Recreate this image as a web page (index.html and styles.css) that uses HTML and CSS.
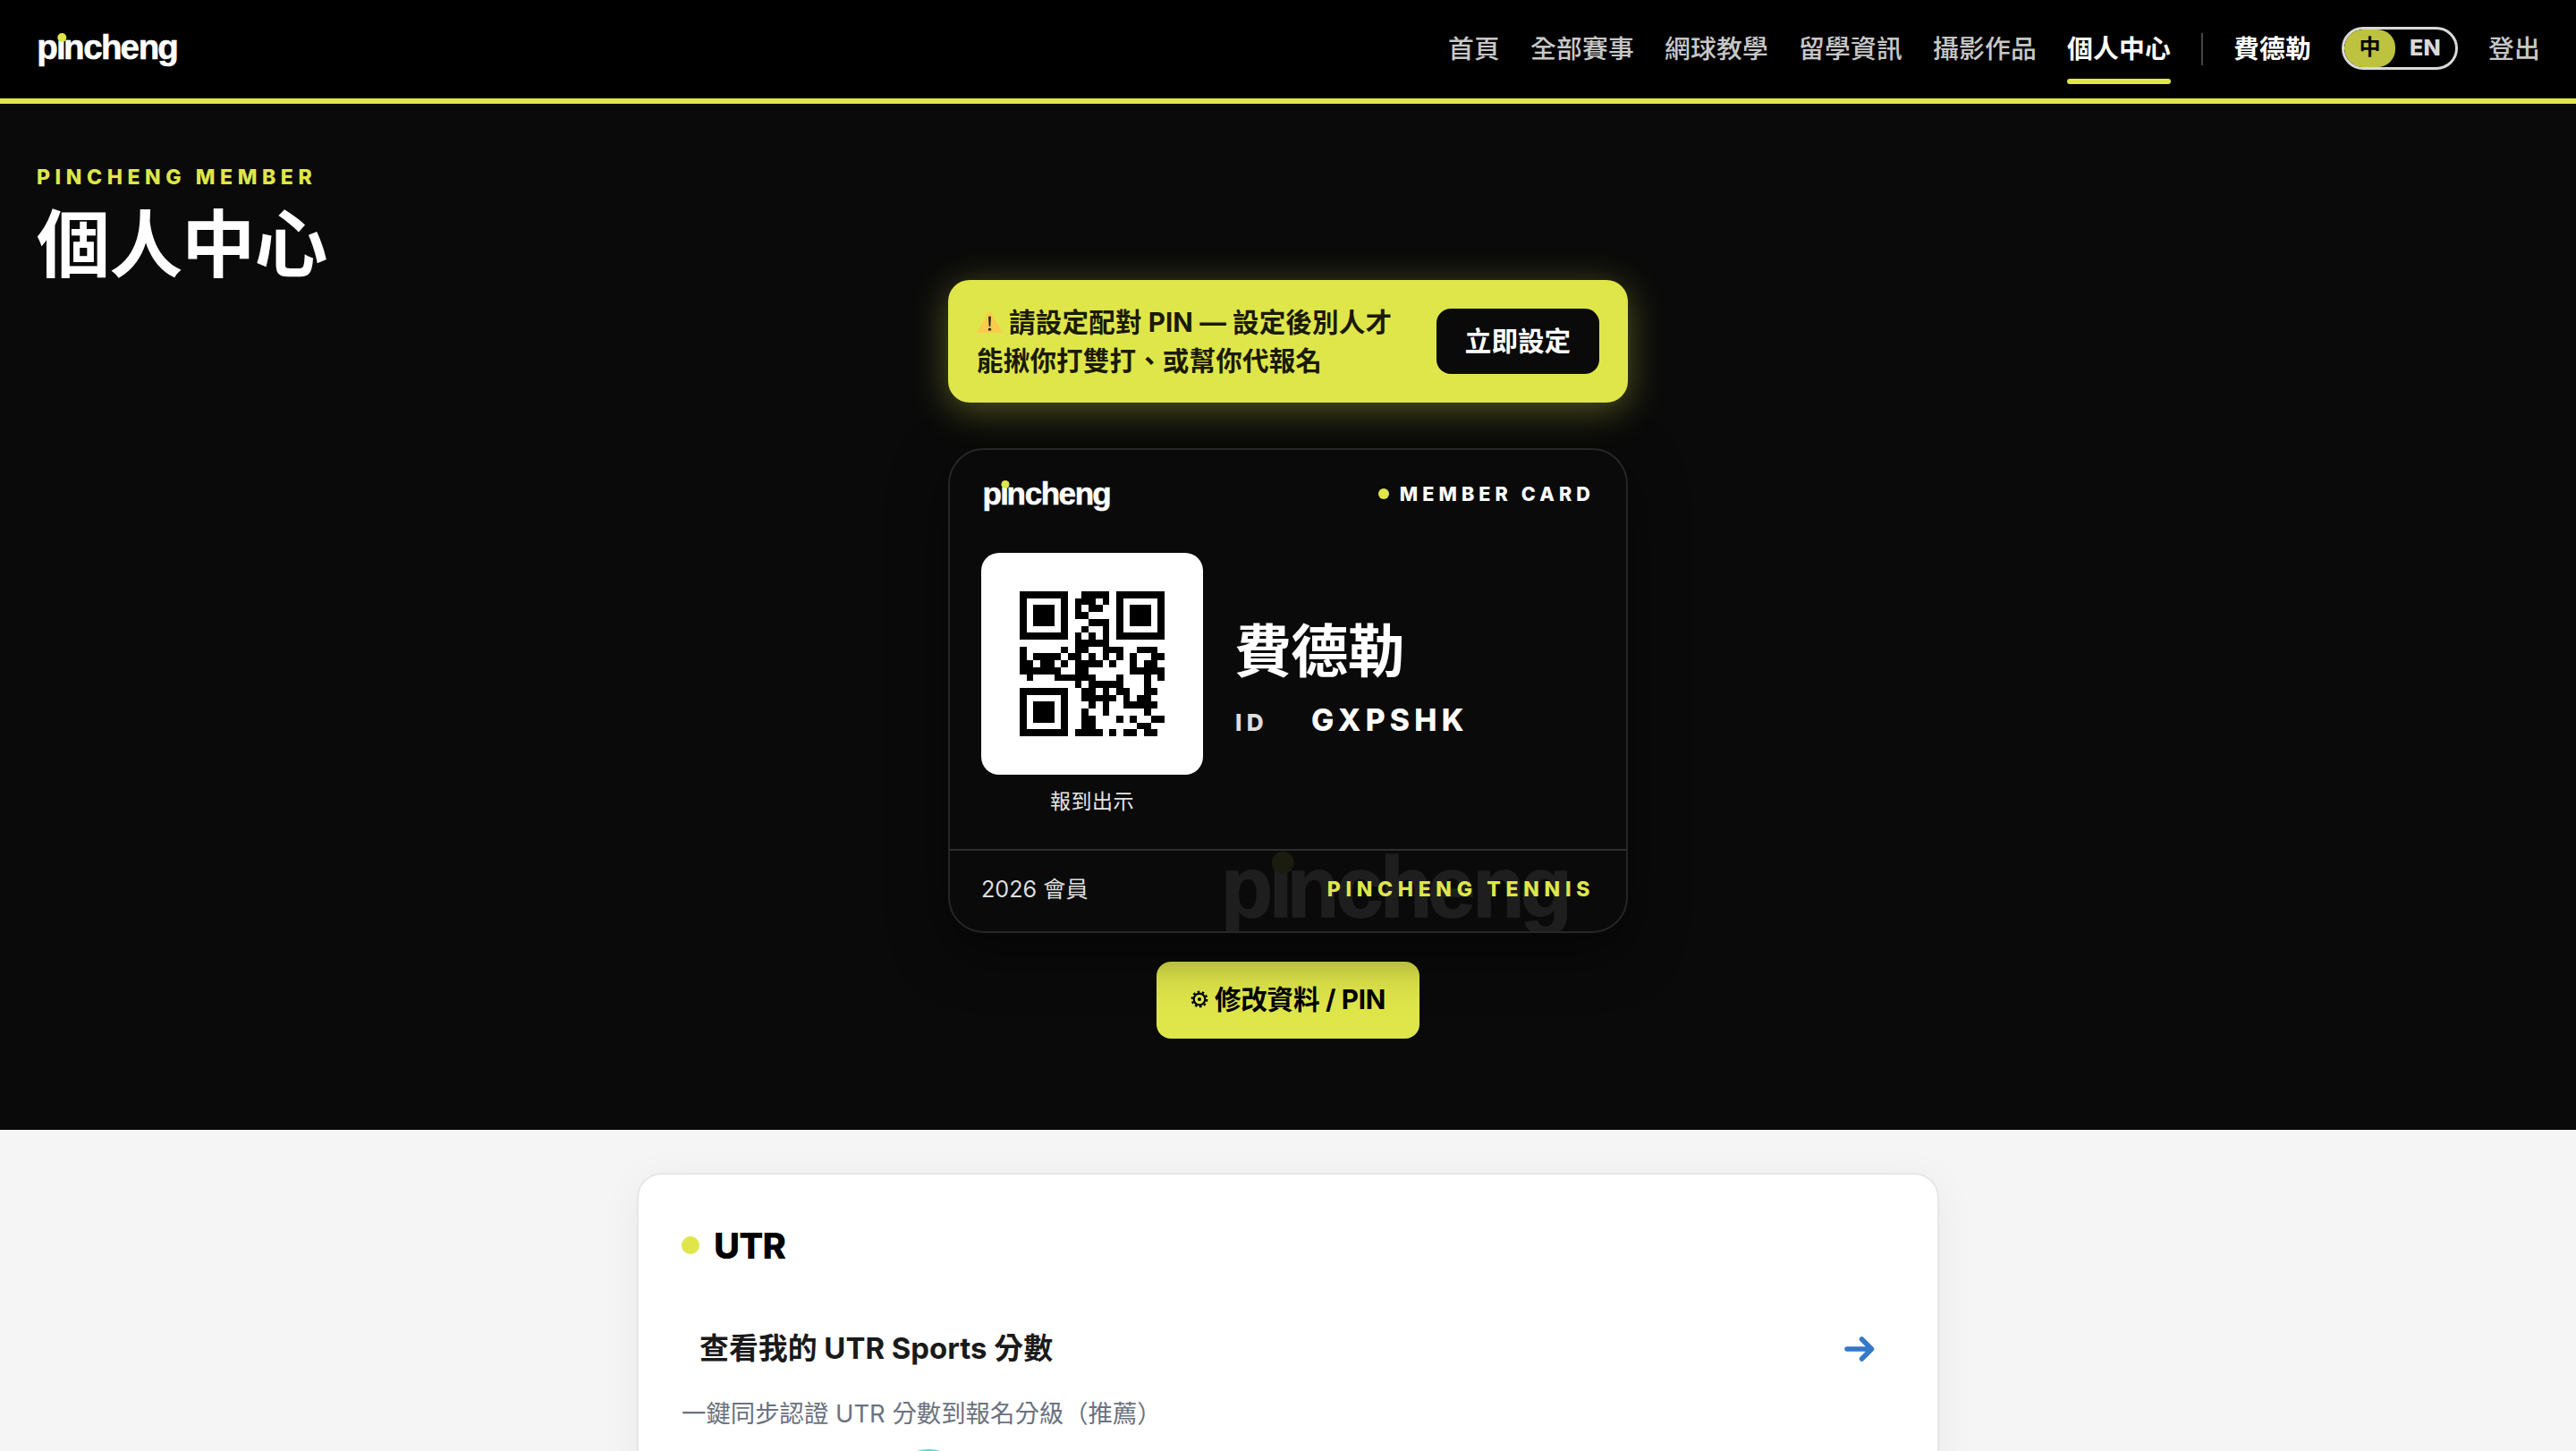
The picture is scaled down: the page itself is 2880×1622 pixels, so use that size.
FILE: index.html
```html
<!DOCTYPE html>
<html lang="zh-Hant">

<head>
    <meta charset="UTF-8">
    <title>個人中心 | pincheng</title>
    <link rel="stylesheet" href="styles.css">
</head>

<body>

    <header class="navbar">
        <a class="brand"><svg class="logo" width="156" height="37" viewBox="0 0 156 37">
                <!-- hides the dot of the i, the ball takes its place -->
                <clipPath id="no-dot">
                    <path d="M-5-5H20V8.300H30V-5H165V45H-5Z" />
                </clipPath>
                <text clip-path="url(#no-dot)" x="-1.7 20.1 28.1 50.2 70.1 91.6 111.8 133.2" y="29.4">pincheng</text>
                <circle cx="26.3" cy="5" r="5" />
            </svg></a>
        <nav class="nav-links">
            <a>首頁</a>
            <a>全部賽事</a>
            <a>網球教學</a>
            <a>留學資訊</a>
            <a>攝影作品</a>
            <a class="active">個人中心</a>
            <span class="nav-divider"></span>
            <a class="nav-user">費德勒</a>
            <div class="lang-toggle">
                <span class="lang on">中</span>
                <span class="lang">EN</span>
            </div>
            <a>登出</a>
        </nav>
    </header>

    <section class="hero">
        <div class="eyebrow">PINCHENG MEMBER</div>
        <h1>個人中心</h1>

        <div class="hero-inner">
            <div class="pin-alert">
                <p><svg class="warn" viewBox="0 0 30 30">
                        <path d="M14 3.500Q15 2 16 3.500L29 26Q30 28 28 28H2Q0 28 1 26Z" fill="#fbcb4e" />
                        <path d="M13.500 9h3l-.6 11.500h-1.800z" fill="#2b2a12" />
                        <circle cx="15" cy="24" r="1.700" fill="#2b2a12" />
                    </svg> 請設定配對 PIN — 設定後別人才<br>能揪你打雙打、或幫你代報名</p>
                <button class="btn-dark">立即設定</button>
            </div>

            <div class="member-card">
                <div class="card-top">
                    <svg class="logo" width="142" height="33.700" viewBox="0 0 156 37">
                        <text clip-path="url(#no-dot)" x="-1.7 20.1 28.1 50.2 70.1 91.6 111.8 133.2" y="29.4">pincheng</text>
                        <circle cx="26.3" cy="5" r="5" />
                    </svg>
                    <span class="card-tag">MEMBER CARD</span>
                </div>
                <div class="card-body">
                    <div class="qr-col">
                        <div class="qr">
                            <svg viewBox="0 0 21 21" shape-rendering="crispEdges">
                                <!-- finder patterns -->
                                <path d="M.5.5h6v6h-6zM14.5.5h6v6h-6zM.5 14.500h6v6h-6z" fill="none" stroke="#000" />
                                <path d="M2 2h3v3h-3zM16 2h3v3h-3zM2 16h3v3h-3z" />
                                <!-- data modules, one line per row -->
                                <path stroke="#000" d="M9 .5h4
                                    M8 1.500h3m1 0h1
                                    M8 2.500h1m1 0h2
                                    M8 3.500h2
                                    M10 4.500h3
                                    M9 5.500h1m2 0h1
                                    M8 6.500h1m1 0h1m1 0h1
                                    M8 7.500h5
                                    M0 8.500h1m5 0h1m1 0h2m2 0h3m2 0h3
                                    M0 9.500h1m1 0h4m1 0h2m1 0h1m1 0h1m1 0h1m1 0h1m2 0h2
                                    M0 10.500h2m1 0h2m1 0h1m1 0h4m1 0h1m2 0h1m1 0h2
                                    M0 11.500h6m2 0h2m6 0h5
                                    M1 12.500h1m3 0h6m3 0h1m3 0h1m1 0h1
                                    M8 13.500h1m1 0h5m3 0h1
                                    M9 14.500h2m1 0h1m1 0h2m2 0h2
                                    M9 15.500h5m1 0h1m1 0h2
                                    M10 16.500h1m1 0h1m2 0h5
                                    M9 17.500h1m2 0h1m5 0h1
                                    M9 18.500h2m3 0h1m1 0h1m2 0h2
                                    M9 19.500h2m6 0h2
                                    M8 20.500h4m1 0h1m1 0h2m1 0h2" />
                            </svg>
                        </div>
                        <div class="qr-label">報到出示</div>
                    </div>
                    <div class="member-info">
                        <div class="member-name">費德勒</div>
                        <div class="member-id"><span>ID</span><b>GXPSHK</b></div>
                    </div>
                </div>
                <div class="card-foot">
                    <svg class="logo watermark" width="387" height="91.800" viewBox="0 0 156 37">
                        <text clip-path="url(#no-dot)" x="-1.7 20.1 28.1 50.2 70.1 91.6 111.8 133.2" y="29.4">pincheng</text>
                        <circle cx="26.3" cy="5" r="5" />
                    </svg>
                    <span class="year">2026 會員</span>
                    <span class="club">PINCHENG TENNIS</span>
                </div>
            </div>

            <button class="btn-edit"><svg class="gear" viewBox="0 0 20 20">
                    <circle cx="10" cy="10" r="6.300" fill="none" stroke="#000" stroke-width="2.200" />
                    <circle cx="10" cy="10" r="8.300" fill="none" stroke="#000" stroke-width="2.200" stroke-dasharray="2.600 2.615" />
                    <circle cx="10" cy="10" r="2" />
                </svg>修改資料 / PIN</button>
        </div>
    </section>

    <main class="content">
        <div class="panel">
            <h2>UTR</h2>
            <a class="utr-link">
                <span>查看我的 UTR Sports 分數</span>
                <svg class="arrow" viewBox="0 0 34 28">
                    <path d="M3 14H30M19.500 3 30.500 14 19.500 25" />
                </svg>
            </a>
            <p class="utr-note">一鍵同步認證 UTR 分數到報名分級（推薦）</p>
            <div class="sync-badge"></div>
        </div>
    </main>

</body>

</html>
```

FILE: styles.css
```css
* {
    box-sizing: border-box;
}

body {
    margin: 0;
    height: 1622px;
    overflow: hidden;
    background: #f5f5f5;
    font-family: Inter, "Noto Sans CJK TC", sans-serif;
    color: #000;
}

h1, h2, p {
    margin: 0;
}

button {
    border: 0;
    font-family: inherit;
}

.logo {
    display: block;
    overflow: visible;
}

.logo text {
    font-family: "Liberation Sans", Arial, sans-serif;
    font-size: 38.5px;
    font-weight: 700;
    fill: #fff;
    stroke: #fff;
    stroke-width: 0.6px;
}

.logo circle {
    fill: #dfe64a;
}

/* navbar */
.navbar {
    display: flex;
    align-items: center;
    justify-content: space-between;
    height: 116px;
    padding: 0 40px 0 43px;
    background: #000;
    border-bottom: 6px solid #dfe64a;
}

.nav-links {
    display: flex;
    align-items: center;
    gap: 34px;
    font-size: 28.8px;
    letter-spacing: 0.2px;
    line-height: 42px;
    color: #c7c7c7;
}

.nav-links a {
    position: relative;
    font-weight: 500;
}

.nav-links .active,
.nav-links .nav-user {
    color: #fff;
    font-weight: 700;
}

.nav-links .active::after {
    content: "";
    position: absolute;
    left: 0;
    right: 0;
    bottom: -18px;
    height: 6px;
    border-radius: 3px;
    background: #dfe64a;
}

.nav-divider {
    width: 2px;
    height: 36px;
    background: #444;
}

.lang-toggle {
    display: flex;
    width: 130px;
    height: 48px;
    margin-top: -2px;
    border: 3px solid #fff;
    border-radius: 24px;
    overflow: hidden;
    opacity: 0.85;
    font-size: 25px;
    font-weight: 800;
    color: #fff;
}

.lang {
    flex: 1;
    text-align: center;
    line-height: 41px;
}

.lang.on {
    flex: 0 0 57px;
    border-radius: 20px;
    background: #dfe64a;
    color: #000;
    font-size: 24px;
    font-weight: 700;
    line-height: 40px;
}

/* hero */
.hero {
    height: 1147px;
    padding: 68px 40px 0;
    background: #0a0a0a;
}

.eyebrow {
    padding-left: 1px;
    color: #dfe64a;
    font-size: 23px;
    font-weight: 800;
    letter-spacing: 0.243em;
    line-height: 28px;
}

h1 {
    height: 101px;
    padding-left: 1px;
    color: #fff;
    font-size: 82px;
    font-weight: 700;
    letter-spacing: -0.01em;
    line-height: 123px;
}

.hero-inner {
    width: 760px;
    margin: 0 auto;
    display: flex;
    flex-direction: column;
    align-items: center;
}

.pin-alert {
    display: flex;
    align-items: center;
    justify-content: space-between;
    width: 100%;
    height: 137px;
    margin-bottom: 51px;
    padding: 0 32px;
    border-radius: 24px;
    background: #dfe64a;
    box-shadow: 0 8px 40px rgba(223, 230, 74, 0.35);
    color: #1a1a05;
    font-size: 29.6px;
    font-weight: 700;
    letter-spacing: 0.1px;
    line-height: 43px;
}

.pin-alert p {
    white-space: nowrap;
}

.warn {
    width: 29px;
    height: 29px;
    vertical-align: -3px;
}

.btn-dark {
    width: 182px;
    height: 73px;
    padding: 0 0 2px;
    border-radius: 16px;
    background: #0a0a0a;
    color: #fff;
    font-size: 29.6px;
    font-weight: 700;
    line-height: 36px;
}

.member-card {
    position: relative;
    z-index: 1;
    width: 100%;
    height: 542px;
    border: 2px solid #262626;
    border-radius: 40px;
    background: #0a0a0a;
    box-shadow: 0 20px 60px rgba(0, 0, 0, 0.5);
    color: #fff;
    overflow: hidden;
}

.card-top {
    display: flex;
    align-items: center;
    justify-content: space-between;
    height: 98px;
    padding: 0 35px 0 38px;
}

.card-top .logo {
    margin-top: 4px;
}

.card-tag {
    display: flex;
    align-items: center;
    gap: 12px;
    font-size: 21.6px;
    font-weight: 800;
    letter-spacing: 0.235em;
}

.card-tag::before {
    content: "";
    width: 12px;
    height: 12px;
    border-radius: 50%;
    background: #dfe64a;
}

.card-body {
    display: flex;
    gap: 35px;
    height: 348px;
    padding: 17px 35px 0;
}

.qr {
    width: 248px;
    height: 248px;
    padding: 43px;
    border-radius: 20px;
    background: #fff;
}

.qr svg {
    display: block;
    width: 162px;
    height: 162px;
}

.qr-label {
    padding-top: 12px;
    text-align: center;
    font-size: 23px;
    letter-spacing: 0.5px;
    line-height: 36px;
    color: #e6e6e6;
}

.member-info {
    padding-top: 70px;
}

.member-name {
    font-size: 64px;
    font-weight: 700;
    letter-spacing: -0.01em;
    line-height: 80px;
}

.member-id {
    display: flex;
    align-items: baseline;
    gap: 48px;
    margin-top: 16px;
    padding-left: 1px;
    line-height: 42px;
}

.member-id span {
    color: #ddd;
    font-size: 26.2px;
    font-weight: 800;
    letter-spacing: 0.2em;
}

.member-id b {
    font-size: 33.6px;
    font-weight: 800;
    letter-spacing: 0.157em;
}

.card-foot {
    position: relative;
    display: flex;
    align-items: center;
    justify-content: space-between;
    height: 92px;
    padding: 0 35px 5px;
    border-top: 2px solid #2e2e2e;
    line-height: 30px;
}

.watermark {
    position: absolute;
    left: 307px;
    top: 1px;
    opacity: 0.08;
}

.year {
    color: #ddd;
    font-size: 25.2px;
}

.club {
    position: relative;
    color: #dfe64a;
    font-size: 23px;
    font-weight: 800;
    letter-spacing: 0.247em;
}

.btn-edit {
    display: flex;
    align-items: center;
    justify-content: center;
    gap: 7px;
    width: 294px;
    height: 86px;
    margin-top: 32px;
    padding: 0 0 2px;
    border-radius: 16px;
    background: #dfe64a;
    color: #000;
    font-size: 29.6px;
    font-weight: 700;
    letter-spacing: -0.01em;
    line-height: 36px;
}

.gear {
    width: 20px;
    height: 20px;
}

/* content */
.content {
    padding-top: 48px;
}

.panel {
    width: 1456px;
    height: 700px;
    margin: 0 auto;
    padding: 50px 48px 0;
    border: 2px solid #e6e6e6;
    border-radius: 28px;
    background: #fff;
    box-shadow: 0 8px 48px rgba(0, 0, 0, 0.05);
}

h2 {
    display: flex;
    align-items: center;
    gap: 16px;
    height: 58px;
    font-size: 40px;
    font-weight: 800;
    letter-spacing: -0.02em;
}

h2::before {
    content: "";
    width: 20px;
    height: 20px;
    border-radius: 50%;
    background: #dfe64a;
}

.utr-link {
    display: flex;
    align-items: center;
    justify-content: space-between;
    height: 80px;
    margin-top: 47px;
    padding: 0 22px 0 20px;
    color: #1a1a1a;
    font-size: 32.9px;
    font-weight: 700;
    line-height: 40px;
}

.utr-link span {
    margin-bottom: 2px;
}

.arrow {
    width: 34px;
    height: 28px;
    fill: none;
    stroke: #3478c9;
    stroke-width: 5.5;
    stroke-linecap: round;
    stroke-linejoin: round;
}

.utr-note {
    margin-top: 12px;
    color: #6b7280;
    font-size: 27.4px;
    line-height: 40px;
}

.sync-badge {
    width: 92px;
    height: 92px;
    margin: 20px 0 0 230px;
    border-radius: 50%;
    background: #5fd4cf;
}
```
